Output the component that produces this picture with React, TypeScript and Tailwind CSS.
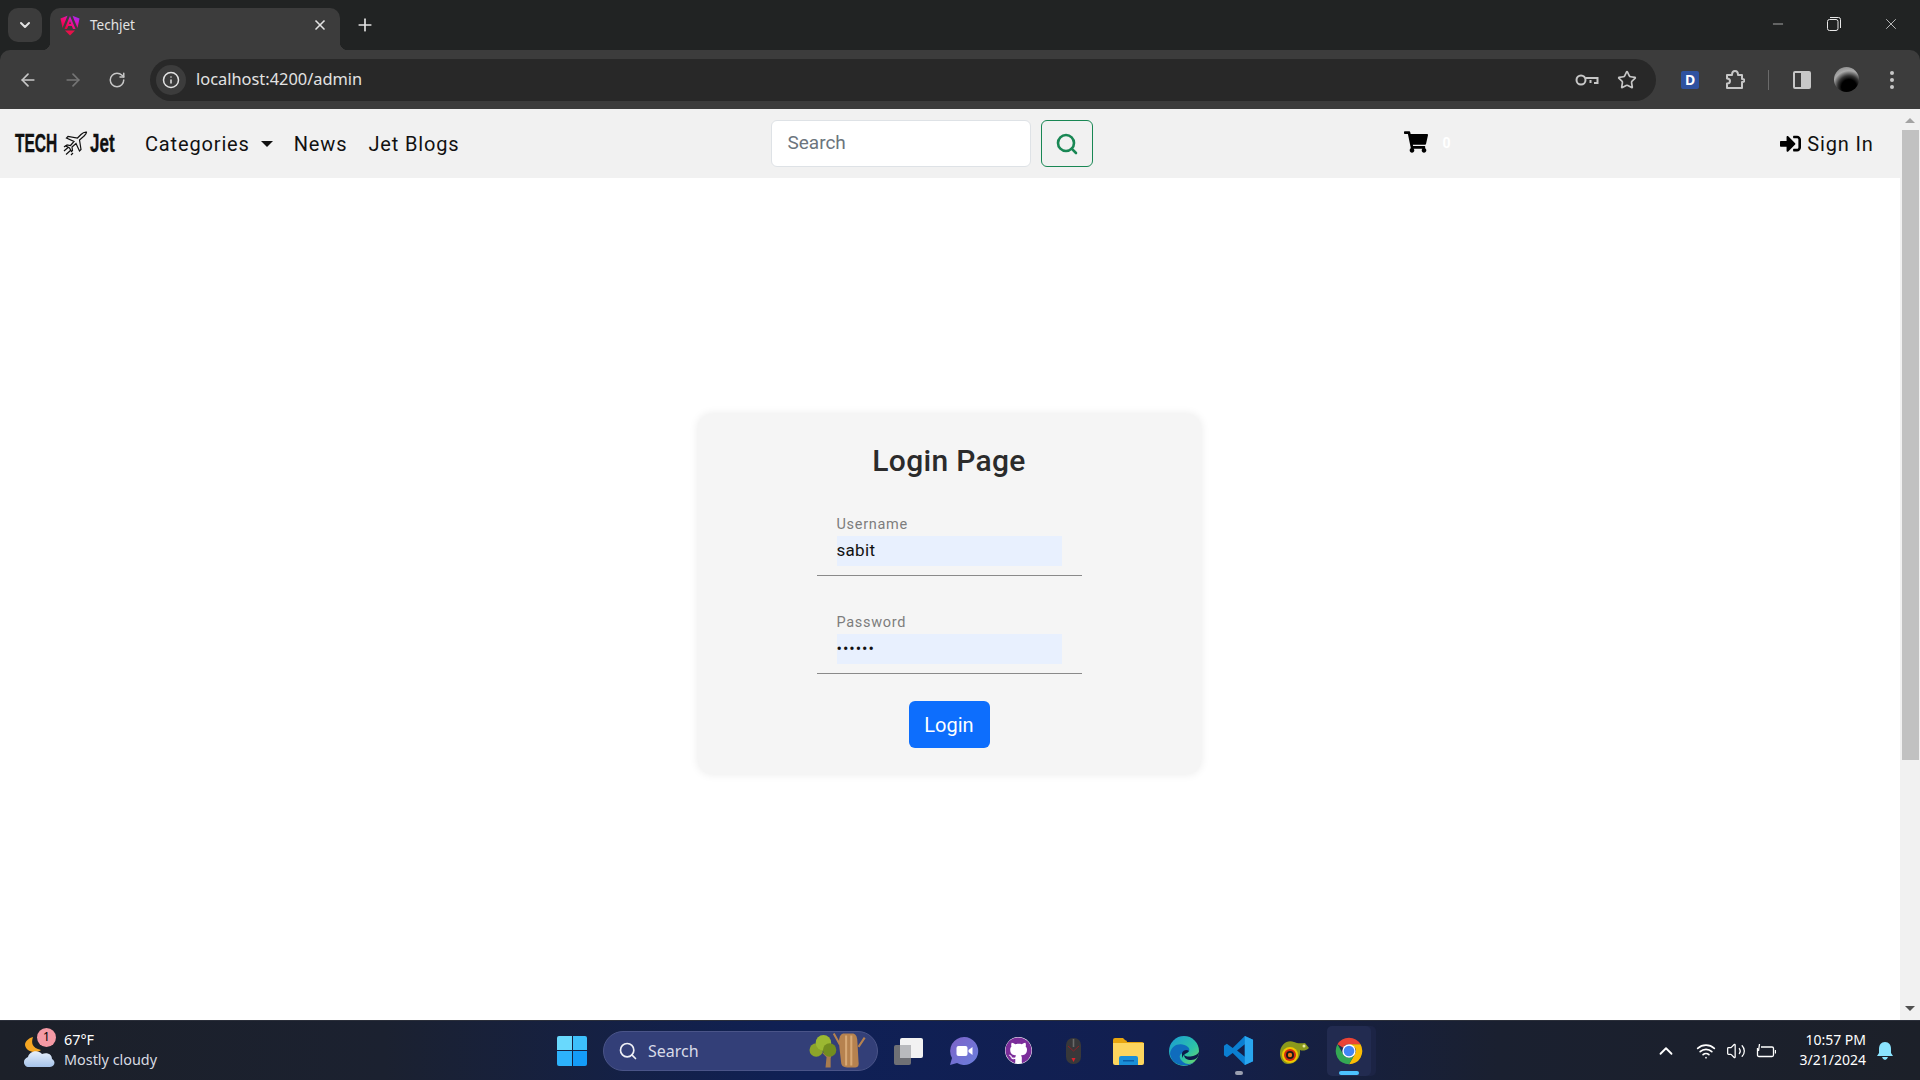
import { ChevronDown, ChevronUp, Info, Star, X, Plus, ArrowLeft, ArrowRight, RotateCw, Minus, Search, Volume2, Wifi } from 'lucide-react'
import { FaGithub, FaShoppingCart, FaSignInAlt } from 'react-icons/fa'

const uiFont = 'font-["Noto_Sans","Open_Sans",sans-serif]'

function AngularIcon() {
  return (
    <svg width="20" height="21" viewBox="0 0 20 21">
      <defs>
        <linearGradient id="ng" x1="0" y1="1" x2="1" y2="0">
          <stop offset="0" stopColor="#e40035" />
          <stop offset="0.45" stopColor="#f60a78" />
          <stop offset="0.7" stopColor="#d01ad0" />
          <stop offset="1" stopColor="#8a2fff" />
        </linearGradient>
      </defs>
      <path d="M0.5 3.4 L7.5 0.8 L2.5 13 Z M12.5 0.8 L19.5 3.4 L17.5 13 Z" fill="url(#ng)" />
      <path d="M10 1 L15.5 14 H13 L11.8 11 H8.2 L7 14 H4.5 Z M10 6 L9 9 H11 Z" fill="url(#ng)" />
      <path d="M5 15.5 H15 L10 20.5 Z" fill="#e8104a" />
    </svg>
  )
}

function LogoJet() {
  return (
    <svg width="25" height="25" viewBox="0 0 25 25" fill="none" stroke="#111" strokeWidth="1.2">
      <path d="M23.5 1.2 C21.5 1 19.5 2 18 3.5 L14.5 7 L5 5.5 L3.5 7 L11 10.5 L7.5 14.5 L4 14 L3 15 L6.5 17 L8.5 20.5 L9.5 19.5 L9 16 L13 12.5 L16.5 20 L18 18.5 L16.5 9 L20.5 5.5 C22 4 23.5 3 23.5 1.2 Z" fill="#f1f1f1" />
      <path d="M1 20 L5 16.5 M3 23.5 L8 19 M1 16 L3 14.5 M8 24 L10 22" />
    </svg>
  )
}

function ChromeIcon() {
  return (
    <svg width="32" height="32" viewBox="0 0 48 48">
      <path d="M24 4 A20 20 0 0 1 41.3 14 L24 14 A10 10 0 0 0 15.3 19 L6.7 14 A20 20 0 0 1 24 4 Z" fill="#ea4335" />
      <path d="M41.3 14 A20 20 0 0 1 24 44 L32.7 29 A10 10 0 0 0 33 19 L24 14 Z" fill="#fbbc04" />
      <path d="M6.7 14 L15.3 29 A10 10 0 0 0 32.7 29 L24 44 A20 20 0 0 1 6.7 14 Z" fill="#34a853" />
      <circle cx="24" cy="24" r="10" fill="#fff" />
      <circle cx="24" cy="24" r="8" fill="#4285f4" />
    </svg>
  )
}

function EdgeIcon() {
  return (
    <svg width="30" height="30" viewBox="0 0 30 30">
      <defs>
        <linearGradient id="edgeTop" x1="0" y1="0" x2="1" y2="1">
          <stop offset="0" stopColor="#1a9ad6" />
          <stop offset="0.6" stopColor="#2cc3a8" />
          <stop offset="1" stopColor="#7fdc5a" />
        </linearGradient>
      </defs>
      <circle cx="15" cy="15" r="15" fill="url(#edgeTop)" />
      <path d="M1 18 C2 8 13 6 19 11 C22 14 20 17 15 17 C10 17 9 22 14 26 C17 28.5 22 28.5 25 26 C20 32 3 31 1 18 Z" fill="#0f6cbd" />
      <path d="M13 17 C14 14 18 13 20 15 C18 18 15 17 13 22 Z" fill="#0d1c4a" />
      <path d="M30 16 C30 21 27 24 22 24 C18 24 15 22 15 19 C16 21 26 22 30 16 Z" fill="#0d1c4a" />
    </svg>
  )
}

function VscodeIcon() {
  return (
    <svg width="31" height="31" viewBox="0 0 32 32">
      <path d="M22.5 1 L31 5 V27 L22.5 31 L10 18.5 L4 23 L1 21 V11 L4 9 L10 13.5 Z M22.5 9.5 L14.5 16 L22.5 22.5 Z" fill="#0b7fd1" />
      <path d="M22.5 1 L31 5 V27 L22.5 31 Z" fill="#29a6ef" />
    </svg>
  )
}

function FolderIcon() {
  return (
    <svg width="31" height="28" viewBox="0 0 31 28">
      <path d="M0 3 Q0 1 2 1 H10 L14 5 H29 Q31 5 31 7 V12 H0 Z" fill="#e8a50f" />
      <path d="M0 6 H31 V26 Q31 28 29 28 H2 Q0 28 0 26 Z" fill="#fdd55e" />
      <path d="M5 6 L10 6 L13 3 L14 5 Z" fill="#e8a50f" />
      <path d="M6 28 V21 Q6 19 8 19 H23 Q25 19 25 21 V28 Z" fill="#1a8fd8" />
      <rect x="10" y="23" width="11" height="1.5" fill="#0a5ea8" />
    </svg>
  )
}

function ChameleonIcon() {
  return (
    <svg width="31" height="28" viewBox="0 0 31 28">
      <path d="M1 16 C1 7 9 2 15 5 C19 7 23 6 26 6 L30 11 C27 14 23 14 21 13 C22 21 16 27 9 27 C4 27 1 22 1 16 Z" fill="#8b9a1c" />
      <circle cx="11" cy="18" r="8" fill="#f2c500" />
      <circle cx="11" cy="18" r="6" fill="#d42a12" />
      <circle cx="11" cy="18" r="4" fill="#1a1a1a" />
      <circle cx="11" cy="18" r="2.2" fill="#ef7b13" />
      <circle cx="25" cy="9" r="1.5" fill="#e8e8a0" />
    </svg>
  )
}

function MouseIcon() {
  return (
    <svg width="17" height="28" viewBox="0 0 17 28">
      <rect x="1" y="1" width="15" height="26" rx="7" fill="#38383a" />
      <path d="M8.5 2 V10" stroke="#6a6a6a" strokeWidth="1.6" />
      <path d="M3 9 L8.5 14 L14 9" stroke="#8e2026" strokeWidth="1" fill="none" />
      <path d="M6.5 21 L8.5 25 L10.5 21 Z" fill="#d8222c" />
    </svg>
  )
}

function ZoomIcon() {
  return (
    <svg width="30" height="30" viewBox="0 0 30 30">
      <defs>
        <linearGradient id="meet" x1="0" y1="0" x2="1" y2="1">
          <stop offset="0" stopColor="#7d62c8" />
          <stop offset="1" stopColor="#6a7fdc" />
        </linearGradient>
      </defs>
      <path d="M15 1 A14 14 0 1 1 8 27 L1 29 L3 22 A14 14 0 0 1 15 1 Z" fill="url(#meet)" />
      <rect x="7.5" y="10" width="11" height="10" rx="2" fill="#fff" />
      <path d="M19.5 14 L23.5 11 V19 L19.5 16 Z" fill="#fff" />
    </svg>
  )
}

function TaskViewIcon() {
  return (
    <svg width="30" height="30" viewBox="0 0 30 30">
      <rect x="6" y="2" width="23" height="20" rx="2" fill="#f2f2f2" />
      <rect x="0" y="9" width="17" height="20" rx="2" fill="#6f7075" />
      <rect x="6" y="9" width="11" height="13" fill="#b9babd" />
    </svg>
  )
}

function WeatherIcon() {
  return (
    <svg width="34" height="36" viewBox="0 0 34 36">
      <path d="M10 4 C8 10 9 15 18 17 C13 21 3 19 2 12 C2 8 6 5 10 4 Z" fill="#f5a623" />
      <defs>
        <linearGradient id="cloud" x1="0" y1="0" x2="0" y2="1">
          <stop offset="0" stopColor="#e8f0fb" />
          <stop offset="1" stopColor="#a5c3ea" />
        </linearGradient>
      </defs>
      <path d="M6 34 C0 34 -1 26 5 24 C6 18 15 16 19 21 C24 19 29 21 29 26 C33 28 32 34 27 34 Z" fill="url(#cloud)" />
    </svg>
  )
}

function TreesIcon() {
  return (
    <svg width="66" height="38" viewBox="0 0 64 36">
      <path d="M16 34 L17 24 L12 19 L19 22 L23 18 L21 25 L21 34 Z" fill="#a87c4f" />
      <circle cx="7" cy="17" r="6.5" fill="#8ca52a" />
      <circle cx="14" cy="10" r="7.5" fill="#9bb832" />
      <circle cx="20" cy="17" r="6.5" fill="#728d1f" />
      <path d="M33 1 Q29 2 29 10 L31 28 Q31 34 37 34 H45 Q49 34 48 28 L47 10 Q47 2 43 1 Z" fill="#b6824f" />
      <path d="M36 3 V32 M41 3 V32" stroke="#d8a976" strokeWidth="2" />
      <path d="M30 12 L24 1 M48 14 L54 5" stroke="#b6824f" strokeWidth="2" />
    </svg>
  )
}

function WinLogo() {
  return (
    <div className="grid w-[30px] grid-cols-2 gap-[1px]">
      <div className="h-[14.5px] w-[14.5px] rounded-tl-[2px] bg-[#69d9fd]" />
      <div className="h-[14.5px] w-[14.5px] rounded-tr-[2px] bg-[#3dc0fb]" />
      <div className="h-[14.5px] w-[14.5px] rounded-bl-[2px] bg-[#2db2fb]" />
      <div className="h-[14.5px] w-[14.5px] rounded-br-[2px] bg-[#149cf8]" />
    </div>
  )
}

function TabStrip() {
  return (
    <div className={`flex h-[50px] items-end bg-[#212323] ${uiFont}`}>
      <div className="mb-[8px] ml-[8px] flex h-[34px] w-[34px] items-center justify-center rounded-[10px] bg-[#3c3c3c]">
        <ChevronDown size={16} strokeWidth={3} className="text-[#e3e3e3]" />
      </div>
      <div className="relative ml-[8px] flex h-[42px] w-[290px] items-center rounded-t-[10px] bg-[#3c3c3c] pb-[8px] pl-[10px] pr-[12px]">
        <div className="absolute bottom-0 left-[-8px] h-[8px] w-[8px] bg-[radial-gradient(circle_at_0_0,transparent_8px,#3c3c3c_8.5px)]" />
        <div className="absolute bottom-0 right-[-8px] h-[8px] w-[8px] bg-[radial-gradient(circle_at_100%_0,transparent_8px,#3c3c3c_8.5px)]" />
        <AngularIcon />
        <span className="ml-[10px] flex-1 text-[13.5px] text-[#e3e3e3]">Techjet</span>
        <X size={16} strokeWidth={2.5} className="text-[#e3e3e3]" />
      </div>
      <Plus size={20} strokeWidth={2} className="mb-[15px] ml-[15px] text-[#e3e3e3]" />
      <div className="flex-1" />
      <div className="mb-[17px] flex items-center text-[#e8e8e8]">
        <Minus size={16} strokeWidth={1} className="mr-[41px]" />
        <svg width="14" height="14" viewBox="0 0 14 14" fill="none" stroke="currentColor" className="mr-[41px]">
          <rect x="0.5" y="2.5" width="10.5" height="11" rx="2" />
          <path d="M3 0.5 H11.5 Q13.5 .5 13.5 2.5 V11" />
        </svg>
        <X size={18} strokeWidth={1} className="mr-[20px]" />
      </div>
    </div>
  )
}

function Toolbar() {
  return (
    <div className="bg-[#212323]">
      <div className={`flex h-[59px] items-center rounded-t-[10px] bg-[#3c3c3c] pl-[18px] ${uiFont}`}>
        <ArrowLeft size={20} strokeWidth={2} className="text-[#c7c7c7]" />
        <ArrowRight size={20} strokeWidth={2} className="ml-[25px] text-[#757575]" />
        <RotateCw size={18} strokeWidth={2} className="ml-[25px] text-[#c7c7c7]" />
        <div className="ml-[24px] flex h-[42px] w-[1506px] items-center rounded-full bg-[#282828] pl-[6px] pr-[19px]">
          <div className="flex h-[30px] w-[30px] items-center justify-center rounded-full bg-[#3c3c3c]">
            <Info size={18} strokeWidth={2} className="text-[#e3e3e3]" />
          </div>
          <span className="ml-[10px] flex-1 text-[16.4px] text-[#e3e3e3]">localhost:4200/admin</span>
          <svg width="24" height="14" viewBox="0 0 24 14" fill="none" stroke="#c7c7c7" strokeWidth="2" className="mr-[18px]">
            <circle cx="6" cy="7" r="4.5" />
            <path d="M10.5 5 H22.5 V10 H19 M15.5 10 V7" />
          </svg>
          <Star size={20} strokeWidth={2} className="text-[#c7c7c7]" />
        </div>
        <div className="ml-[25px] flex h-[18px] w-[18px] items-center justify-center rounded-[2px] bg-[#2f52a0] text-[14px] font-bold text-white">D</div>
        <svg width="20" height="20" viewBox="0 0 20 20" fill="none" stroke="#c7c7c7" strokeWidth="2" className="ml-[26px]">
          <path d="M2 5 H7 Q7 1 10 1 Q13 1 13 5 H17 V9 Q19.5 9 19.5 10.5 Q19.5 12 17 12 V18 H2 V13.5 Q5 13.5 5 11 Q5 8.5 2 8.5 Z" strokeLinejoin="round" />
        </svg>
        <div className="ml-[23px] h-[20px] w-[1px] bg-[#6b6b6b]" />
        <div className="ml-[24px] flex h-[18px] w-[18px] overflow-hidden rounded-[2px] border-2 border-[#c7c7c7]">
          <div className="flex-1" />
          <div className="w-[8px] bg-[#c7c7c7]" />
        </div>
        <div className="ml-[23px] h-[25px] w-[25px] rounded-full bg-[radial-gradient(circle_at_60%_80%,#000_30%,#333_45%,#aaa_65%,#777_100%)]" />
        <div className="ml-[31px] flex flex-col gap-[3px]">
          <div className="h-[4px] w-[4px] rounded-full bg-[#c7c7c7]" />
          <div className="h-[4px] w-[4px] rounded-full bg-[#c7c7c7]" />
          <div className="h-[4px] w-[4px] rounded-full bg-[#c7c7c7]" />
        </div>
      </div>
    </div>
  )
}

function Navbar() {
  return (
    <nav className='flex h-[69px] items-center bg-[#f1f1f1] font-["Roboto",sans-serif] text-[20px] tracking-[0.85px] text-[#111]'>
      <div className='ml-[15px] flex w-[100px] items-center font-["Liberation_Sans",sans-serif] text-[25px] font-bold tracking-[0] text-[#111] [-webkit-text-stroke:0.4px_#111]'>
        <span className="w-[48px] origin-left scale-x-[0.62]">TECH</span>
        <span><LogoJet /></span>
        <span className="ml-[2px] w-[25px] origin-left scale-x-[0.68]">Jet</span>
      </div>
      <span className="ml-[30px]">Categories</span>
      <div className="ml-[11px] h-0 w-0 border-x-[6px] border-t-[6px] border-x-transparent border-t-[#111]" />
      <span className="ml-[21px]">News</span>
      <span className="ml-[21px]">Jet Blogs</span>
      <div className="ml-[312px] flex h-[47px] w-[260px] items-center rounded-[6px] border border-[#dee2e6] bg-white pl-[15px] text-[19px] tracking-[0] text-[#6c757d]">Search</div>
      <div className="ml-[10px] flex h-[47px] w-[52px] items-center justify-center rounded-[6px] border border-[#198754] text-[#198754]">
        <Search size={24} strokeWidth={2.6} />
      </div>
      <FaShoppingCart size={24} className="mb-[4px] ml-[311px] text-black" />
      <span className="ml-[14px] text-[14px] font-bold text-white">0</span>
      <FaSignInAlt size={21} className="ml-[329px] text-black" />
      <span className="ml-[6px]">Sign In</span>
    </nav>
  )
}

function Field({ label, value, masked }: { label: string; value: string; masked?: boolean }) {
  return (
    <div className="flex w-[265px] flex-col border-b border-[#8a8a8a] px-[20px] pb-[9px]">
      <span className="mb-[3px] text-[14.5px] leading-[17px] tracking-[0.7px] text-[#7d7d7d]">{label}</span>
      <div className={`flex h-[30px] items-center bg-[#e8f0fe] text-[#111] ${masked ? 'text-[16px] tracking-[1px]' : 'text-[17px] tracking-[0.3px]'}`}>{value}</div>
    </div>
  )
}

function LoginCard() {
  return (
    <div className='flex h-[360px] w-[503px] flex-col items-center rounded-[14px] bg-[#f5f5f5] pt-[22px] font-["Roboto",sans-serif] shadow-[0_0_10px_rgba(0,0,0,0.09)]'>
      <h1 className="text-[30px] font-medium leading-[50px] tracking-[0.3px] text-[#2b2b2b]">Login Page</h1>
      <div className="mt-[30px]">
        <Field label="Username" value="sabit" />
      </div>
      <div className="mt-[38px]">
        <Field label="Password" value="••••••" masked />
      </div>
      <button className="mt-[27px] h-[47px] w-[81px] rounded-[6px] bg-[#0d6efd] text-[20px] text-white">Login</button>
    </div>
  )
}

function Scrollbar() {
  return (
    <div className="flex w-[20px] flex-col items-center bg-[#f1f1f1]">
      <div className="mt-[9px] h-0 w-0 border-x-[5px] border-b-[5px] border-x-transparent border-b-[#a3a3a3]" />
      <div className="mt-[7px] h-[630px] w-[17px] bg-[#c1c1c1]" />
      <div className="flex-1" />
      <div className="mb-[9px] h-0 w-0 border-x-[5px] border-t-[5px] border-x-transparent border-t-[#505050]" />
    </div>
  )
}

function Taskbar() {
  return (
    <div className={`flex h-[60px] items-center border-t border-[#2b2f3a] bg-[linear-gradient(90deg,#1c2029_0%,#1b2130_20%,#0f2056_42%,#121f50_60%,#1a2030_78%,#1c2029_100%)] text-white ${uiFont}`}>
      <div className="relative ml-[23px] flex w-[534px] items-center">
        <WeatherIcon />
        <div className="absolute left-[14px] top-[-4px] flex h-[19px] w-[19px] items-center justify-center rounded-full bg-[#f59aa5] text-[12px] text-black">1</div>
        <div className="ml-[7px] mt-[-2px] flex flex-col text-[14.4px] leading-[20px]">
          <span>67°F</span>
          <span className="text-[#d8dbe2]">Mostly cloudy</span>
        </div>
      </div>
      <WinLogo />
      <div className="ml-[16px] flex h-[40px] w-[275px] items-center rounded-full border border-[#4a5488] bg-[#333f78] pl-[14px] pr-[2px] text-[16px] text-[#d8dbe8]">
        <Search size={20} strokeWidth={2} className="text-[#eef0f6]" />
        <span className="ml-[10px] flex-1">Search</span>
        <TreesIcon />
      </div>
      <div className="ml-[3px] flex items-center">
        <div className="flex w-[55px] justify-center"><TaskViewIcon /></div>
        <div className="flex w-[55px] justify-center"><ZoomIcon /></div>
        <div className="flex w-[55px] justify-center"><FaGithub size={27} className="rounded-full bg-white text-[#7b2d9a]" /></div>
        <div className="flex w-[55px] justify-center"><MouseIcon /></div>
        <div className="flex w-[55px] justify-center"><FolderIcon /></div>
        <div className="flex w-[55px] justify-center"><EdgeIcon /></div>
        <div className="relative flex w-[55px] justify-center">
          <VscodeIcon />
          <div className="absolute bottom-[-9px] h-[4px] w-[8px] rounded-full bg-[#9a9fb0]" />
        </div>
        <div className="ml-[1px] flex w-[55px] justify-center"><ChameleonIcon /></div>
        <div className="relative ml-[5px] flex h-[50px] w-[44px] items-center justify-center rounded-[5px] bg-[#222b50] shadow-[5px_0_0_#1c2445]">
          <ChromeIcon />
          <div className="absolute bottom-[1px] h-[4px] w-[20px] rounded-full bg-[#4cc2ff]" />
        </div>
      </div>
      <div className="flex-1" />
      <ChevronUp size={22} strokeWidth={2} className="mr-[19px] text-white" />
      <Wifi size={20} strokeWidth={2} className="mr-[10px] text-white" />
      <Volume2 size={20} strokeWidth={1.5} className="mr-[10px] text-white" />
      <svg width="20" height="16" viewBox="0 0 20 16" fill="none" stroke="white" strokeWidth="1.3" className="mr-[24px]">
        <path d="M5 4 H16 Q17.5 4 17.5 5.5 V12 Q17.5 13.5 16 13.5 H3 Q1.5 13.5 1.5 12 V5" />
        <path d="M19.5 7 V10.5 M3.5 1 L2.5 8" />
      </svg>
      <div className="mt-[-2px] flex flex-col items-end text-[14px] leading-[20px]">
        <span>10:57 PM</span>
        <span>3/21/2024</span>
      </div>
      <svg width="18" height="20" viewBox="0 0 18 20" className="ml-[10px] mr-[26px]" fill="#8ae4ff">
        <path d="M9 1 C5 1 3 4 3 8 V12 L1 15 H17 L15 12 V8 C15 4 13 1 9 1 Z" />
        <path d="M6 16 H12 Q11 19 9 19 Q7 19 6 16 Z" />
      </svg>
    </div>
  )
}

export default function App() {
  return (
    <div className="flex h-[1080px] w-[1920px] flex-col overflow-hidden bg-white">
      <TabStrip />
      <Toolbar />
      <div className="flex min-h-0 flex-1">
        <div className="flex min-w-0 flex-1 flex-col">
          <Navbar />
          <main className="flex flex-1 items-center justify-center pb-[10px] pr-[2px]">
            <LoginCard />
          </main>
        </div>
        <Scrollbar />
      </div>
      <Taskbar />
    </div>
  )
}
